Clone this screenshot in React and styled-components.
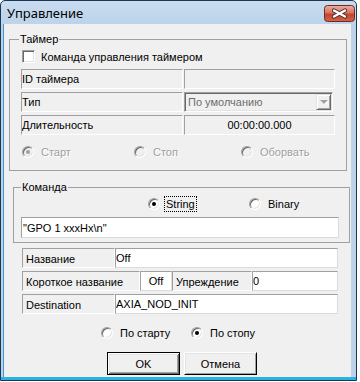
import styled, { createGlobalStyle } from 'styled-components'

const GlobalStyle = createGlobalStyle`
  html, body {
    margin: 0;
    padding: 0;
    background: #fff;
  }
  body {
    font-family: "Liberation Sans", Arial, sans-serif;
    font-size: 11px;
    color: #000;
  }
  * {
    box-sizing: border-box;
  }
`

function Radio({ checked, disabled, focus, children }) {
    return (
        <RadioItem>
            <RadioCircle $checked={checked} $disabled={disabled} />
            <RadioLabel $disabled={disabled} $focus={focus}>{children}</RadioLabel>
        </RadioItem>
    )
}

function CloseIcon() {
    return (
        <svg width="31" height="17" viewBox="0 0 31 17">
            <defs>
                <linearGradient id="closeGrad" x1="0" y1="0" x2="0" y2="1">
                    <stop offset="0" stopColor="#eab1a3" />
                    <stop offset="0.45" stopColor="#d8735f" />
                    <stop offset="0.55" stopColor="#c4442e" />
                    <stop offset="1" stopColor="#d0654a" />
                </linearGradient>
            </defs>
            <rect x="0.5" y="0.5" width="30" height="16" rx="3" fill="url(#closeGrad)" stroke="#6e2b22" />
            <path d="M10 5.5 L21 11.5 M21 5.5 L10 11.5" stroke="#4b2a27" strokeWidth="4.2" strokeLinecap="round" />
            <path d="M10 5.5 L21 11.5 M21 5.5 L10 11.5" stroke="#fff" strokeWidth="2.4" strokeLinecap="round" />
        </svg>
    )
}

function App() {
    return (
        <>
            <GlobalStyle />
            <Window>
                <TitleBar>
                    <Title>Управление</Title>
                    <CloseButton><CloseIcon /></CloseButton>
                </TitleBar>

                <Body>
                    <Group $margin="9px 4px 0 5px" $padding="3px 11px 10px 11px">
                        <Legend $offset={-2}>Таймер</Legend>
                        <CheckRow>
                            <CheckBox />
                            <span>Команда управления таймером</span>
                        </CheckRow>

                        <TimerGrid>
                            <Cell>ID таймера</Cell>
                            <Cell />
                            <Cell>Тип</Cell>
                            <Combo>
                                <span>По умолчанию</span>
                                <DropButton><Arrow /></DropButton>
                            </Combo>
                            <Cell>Длительность</Cell>
                            <Cell $center>00:00:00.000</Cell>
                        </TimerGrid>

                        <TimerRadios>
                            <Radio checked disabled>Старт</Radio>
                            <Radio disabled>Стоп</Radio>
                            <Radio disabled>Оборвать</Radio>
                        </TimerRadios>
                    </Group>

                    <Group $margin="10px 1px 0 9px" $padding="2px 10px 4px 7px">
                        <Legend $offset={0}>Команда</Legend>
                        <CommandRadios>
                            <Radio checked focus>String</Radio>
                            <Radio>Binary</Radio>
                        </CommandRadios>
                        <TextInput>"GPO 1 xxxHx\n"</TextInput>
                    </Group>

                    <Rows>
                        <Row $cols="93px 1fr">
                            <Cell $label>Название</Cell>
                            <Cell $white>Off</Cell>
                        </Row>
                        <Row $cols="118px 32px 80px 1fr">
                            <Cell $label>Короткое название</Cell>
                            <Cell $white $center>Off</Cell>
                            <Cell $label>Упреждение</Cell>
                            <Cell $white>0</Cell>
                        </Row>
                        <Row $cols="93px 1fr">
                            <Cell $label>Destination</Cell>
                            <Cell $white>AXIA_NOD_INIT</Cell>
                        </Row>
                    </Rows>

                    <BottomRadios>
                        <Radio>По старту</Radio>
                        <Radio checked>По стопу</Radio>
                    </BottomRadios>

                    <Buttons>
                        <Button $default>OK</Button>
                        <Button>Отмена</Button>
                    </Buttons>
                </Body>
            </Window>
        </>
    )
}

export default App

const Window = styled.div`
    width: 357px;
    height: 381px;
    display: flex;
    flex-direction: column;
    border: 1px solid #1d3651;
    border-radius: 5px 5px 0 0;
    background: linear-gradient(to bottom, #c9dcf0 0, #bcd3ea 24px, #bcd3ea calc(100% - 3px), #29b3e3 calc(100% - 3px));
`

const TitleBar = styled.div`
    height: 23px;
    display: flex;
    align-items: flex-start;
    justify-content: space-between;
    padding-left: 6px;
`

const Title = styled.div`
    font-family: "Noto Sans", "Liberation Sans", sans-serif;
    font-size: 13px;
    line-height: 16px;
    margin-top: 4px;
`

const CloseButton = styled.div`
    display: flex;
    margin: 4px 1px 0 0;
`

const Body = styled.div`
    flex: 1;
    display: flex;
    flex-direction: column;
    margin: 0 5px 3px 2px;
    background: #f0f0f0;
    border-left: 1px solid #3f93d8;
`

const Group = styled.fieldset`
    margin: ${p => p.$margin};
    padding: ${p => p.$padding};
    border: 1px solid #a0a0a0;
    min-width: 0;
    display: flex;
    flex-direction: column;
`

const Legend = styled.legend`
    margin-left: ${p => p.$offset}px;
    padding: 0 1px;
    line-height: 13px;
`

const CheckRow = styled.div`
    height: 15px;
    display: flex;
    align-items: center;
    gap: 6px;
    padding-left: 1px;
`

const CheckBox = styled.span`
    width: 13px;
    height: 13px;
    background: #fff;
    border: 1px solid;
    border-color: #a0a0a0 #fff #fff #a0a0a0;
    box-shadow: inset 1px 1px #696969, inset -1px -1px #e3e3e3;
`

const TimerGrid = styled.div`
    margin-top: 5px;
    display: grid;
    grid-template-columns: 162px 1fr;
    grid-auto-rows: 20px;
    column-gap: 1px;
    row-gap: 3px;
`

const Cell = styled.div`
    display: flex;
    align-items: center;
    justify-content: ${p => p.$center ? 'center' : 'flex-start'};
    padding-left: ${p => p.$center ? 0 : p.$label ? 3 : 0}px;
    padding-top: ${p => p.$label ? 1 : 0}px;
    border: 1px solid;
    border-color: ${p => p.$white ? '#a0a0a0 #dcdcdc #dcdcdc #a0a0a0' : '#a0a0a0 #fff #fff #a0a0a0'};
    background: ${p => p.$white ? '#fff' : '#f0f0f0'};
    white-space: nowrap;
    overflow: hidden;
`

const Combo = styled.div`
    display: flex;
    align-items: center;
    justify-content: space-between;
    margin-right: 2px;
    padding: 1px 1px 1px 3px;
    border: 1px solid;
    border-color: #a0a0a0 #fff #fff #a0a0a0;
    box-shadow: inset 1px 1px #696969, inset -1px -1px #e3e3e3;
    background: #f0f0f0;
    color: #6d6d6d;
`

const DropButton = styled.div`
    width: 15px;
    height: 16px;
    display: flex;
    align-items: center;
    justify-content: center;
    border: 1px solid;
    border-color: #e3e3e3 #696969 #696969 #e3e3e3;
    box-shadow: inset 1px 1px #fff, inset -1px -1px #a0a0a0;
    background: #f0f0f0;
`

const Arrow = styled.span`
    width: 0;
    height: 0;
    border-left: 4px solid transparent;
    border-right: 4px solid transparent;
    border-top: 4px solid #a0a0a0;
    filter: drop-shadow(1px 1px 0 #fff);
`

const TimerRadios = styled.div`
    margin: 9px 0 0 1px;
    height: 16px;
    display: grid;
    grid-template-columns: 112px 107px 1fr;
`

const CommandRadios = styled.div`
    margin-left: 127px;
    height: 16px;
    display: grid;
    grid-template-columns: 101px 1fr;
`

const BottomRadios = styled.div`
    margin: 11px 0 0 97px;
    height: 16px;
    display: grid;
    grid-template-columns: 90px 1fr;
`

const RadioItem = styled.div`
    display: flex;
    align-items: center;
    gap: 5px;
`

const RadioCircle = styled.span`
    flex: none;
    width: 12px;
    height: 12px;
    border-radius: 50%;
    border: 1px solid;
    border-color: #a0a0a0 #fff #fff #a0a0a0;
    box-shadow: inset 1px 1px #696969, inset -1px -1px #e3e3e3;
    background: ${p => p.$disabled ? '#f0f0f0' : '#fff'};
    display: flex;
    align-items: center;
    justify-content: center;

    &::after {
        content: '';
        width: 4px;
        height: 4px;
        border-radius: 50%;
        background: ${p => p.$disabled ? '#a0a0a0' : '#000'};
        display: ${p => p.$checked ? 'block' : 'none'};
    }
`

const RadioLabel = styled.span`
    color: ${p => p.$disabled ? '#a0a0a0' : '#000'};
    text-shadow: ${p => p.$disabled ? '1px 1px 0 #fff' : 'none'};
    line-height: 14px;
    padding: 0 1px;
    margin-left: ${p => p.$focus ? -1 : 0}px;
    border: 1px ${p => p.$focus ? 'dotted #000' : 'solid transparent'};
`

const TextInput = styled.div`
    margin-top: 5px;
    height: 21px;
    display: flex;
    align-items: center;
    padding-left: 1px;
    background: #fff;
    border: 1px solid;
    border-color: #a0a0a0 #dcdcdc #dcdcdc #a0a0a0;
`

const Rows = styled.div`
    margin: 5px 13px 0 18px;
    display: flex;
    flex-direction: column;
    gap: 3px;
`

const Row = styled.div`
    height: 20px;
    display: grid;
    grid-template-columns: ${p => p.$cols};
    column-gap: 0;
`

const Buttons = styled.div`
    margin: 11px 0 0 103px;
    display: flex;
    gap: 4px;
`

const Button = styled.button`
    width: 73px;
    height: 23px;
    padding: 0;
    font-family: "Liberation Sans", Arial, sans-serif;
    font-size: 11px;
    color: #000;
    background: #f0f0f0;
    border: 1px solid;
    border-color: ${p => p.$default ? '#000' : '#fff #000 #000 #fff'};
    box-shadow: ${p => p.$default
        ? 'inset 1px 1px #fff, inset -1px -1px #696969, inset 2px 2px #e3e3e3, inset -2px -2px #a0a0a0'
        : 'inset 1px 1px #e3e3e3, inset -1px -1px #a0a0a0'};
`
